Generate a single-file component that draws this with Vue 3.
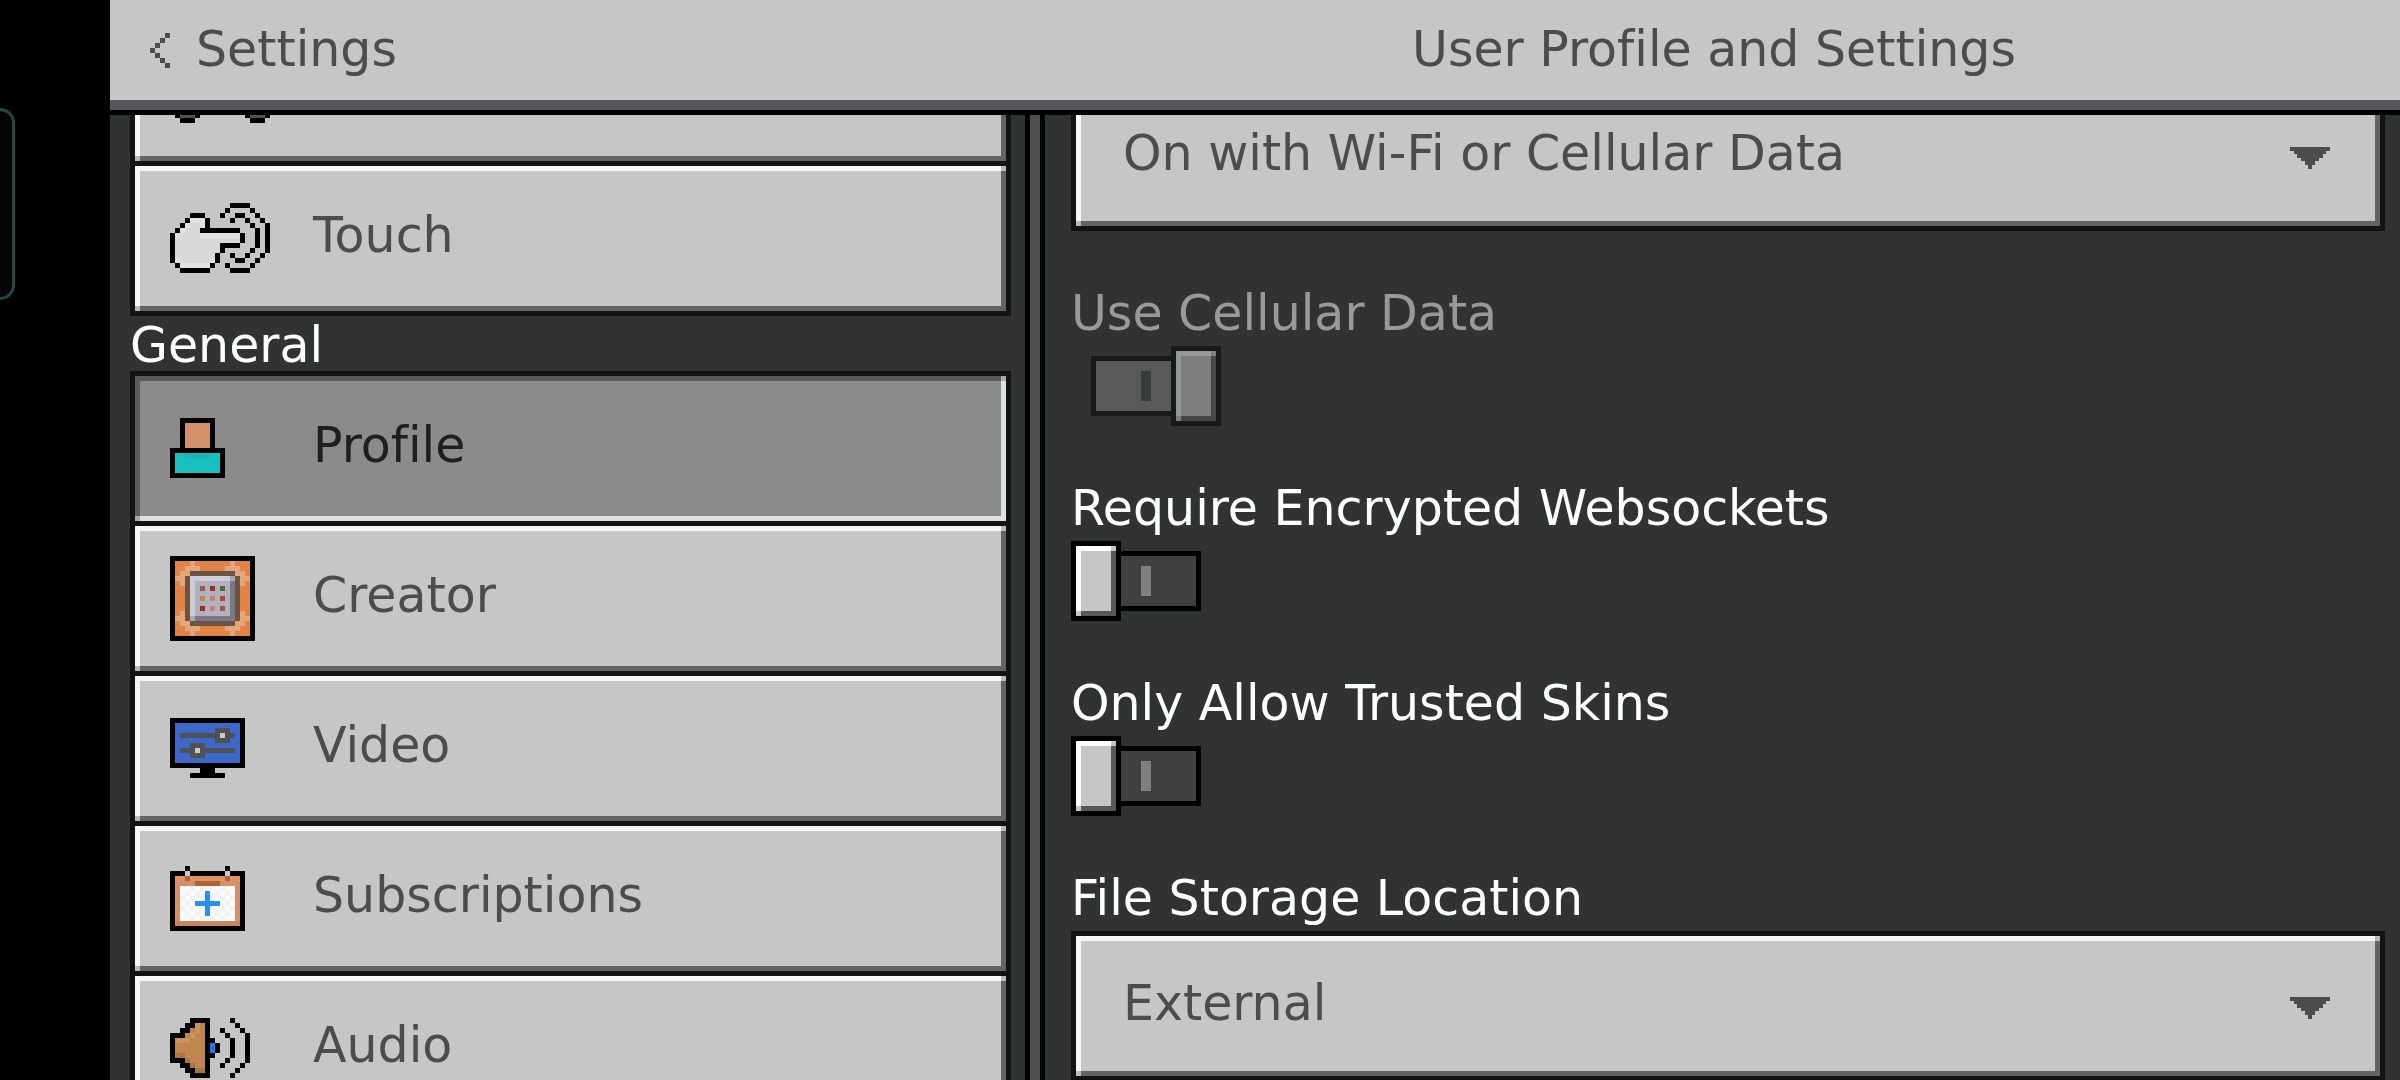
<template>
  <div class="screen">
    <div class="cutout">
      <div class="edge-handle"></div>
    </div>

    <div class="settings">
      <header class="top-bar">
        <button class="back-button">
          <svg class="back-icon" viewBox="0 0 4 7" width="20" height="35" shape-rendering="crispEdges" fill="currentColor">
            <path d="M3 0h1v1h-1zM2 1h1v1h-1zM1 2h1v1h-1zM0 3h1v1h-1zM1 4h1v1h-1zM2 5h1v1h-1zM3 6h1v1h-1z" />
          </svg>
          <span>Settings</span>
        </button>
        <h1 class="title">User Profile and Settings</h1>
      </header>

      <div class="panels">
        <nav class="sidebar">
          <template v-for="group in groups" :key="group.name">
            <h2 v-if="group.title" class="group-title">{{ group.title }}</h2>
            <div :class="['group', { 'scrolled': !group.title }]">
              <button
                v-for="item in group.items"
                :key="item.icon"
                :class="['nav-item', 'bevel', { 'active': item.icon === current }]"
                :aria-label="item.icon"
                @click="current = item.icon"
              >
                <span class="nav-icon">
                  <svg
                    :viewBox="`0 0 ${icons[item.icon][0].length} ${icons[item.icon].length}`"
                    :width="icons[item.icon][0].length * 5"
                    :height="icons[item.icon].length * 5"
                    shape-rendering="crispEdges"
                  >
                    <rect
                      v-for="(p, i) in toPixels(icons[item.icon])"
                      :key="i"
                      :x="p.x"
                      :y="p.y"
                      :width="p.w"
                      height="1"
                      :fill="p.color"
                    />
                  </svg>
                </span>
                <span class="nav-label">{{ item.label }}</span>
              </button>
            </div>
          </template>
        </nav>

        <div class="divider"></div>

        <main class="content">
          <div class="dropdown scrolled-dropdown">
            <select v-model="multiplayer" class="bevel" aria-label="Websocket network">
              <option>On with Wi-Fi or Cellular Data</option>
              <option>On with Wi-Fi only</option>
            </select>
            <svg class="arrow" viewBox="0 0 40 22" width="40" height="22" shape-rendering="crispEdges">
              <path :d="arrowPath" fill="#4c4c4c" />
            </svg>
          </div>

          <div v-for="option in options" :key="option.id" class="option">
            <label :for="option.id" :class="{ 'disabled': option.disabled }">{{ option.label }}</label>
            <input
              :id="option.id"
              v-model="option.value"
              type="checkbox"
              class="toggle"
              :disabled="option.disabled"
            />
          </div>

          <div class="option">
            <label for="storage">File Storage Location</label>
            <div class="dropdown">
              <select id="storage" v-model="storage" class="bevel">
                <option>External</option>
                <option>Application</option>
              </select>
              <svg class="arrow" viewBox="0 0 40 22" width="40" height="22" shape-rendering="crispEdges">
                <path :d="arrowPath" fill="#4c4c4c" />
              </svg>
            </div>
          </div>
        </main>
      </div>
    </div>
  </div>
</template>

<script setup>
import { ref } from 'vue';

const current = ref('profile');
const multiplayer = ref('On with Wi-Fi or Cellular Data');
const storage = ref('External');

const groups = [
  {
    name: 'controls',
    items: [
      { icon: 'controller', label: '' },
      { icon: 'touch', label: 'Touch' },
    ],
  },
  {
    name: 'general',
    title: 'General',
    items: [
      { icon: 'profile', label: 'Profile' },
      { icon: 'creator', label: 'Creator' },
      { icon: 'video', label: 'Video' },
      { icon: 'subscriptions', label: 'Subscriptions' },
      { icon: 'audio', label: 'Audio' },
    ],
  },
];

const options = ref([
  { id: 'cellular', label: 'Use Cellular Data', value: true, disabled: true },
  { id: 'websockets', label: 'Require Encrypted Websockets', value: false, disabled: false },
  { id: 'skins', label: 'Only Allow Trusted Skins', value: false, disabled: false },
]);

const arrowPath = 'M0 0h40v4h-4v3h-3v4h-4v3h-4v4h-3v4h-4v-4h-3v-4h-4v-3h-4v-4h-3v-3h-4z';

// One character per pixel, '.' is transparent
const palette = {
  K: '#000000',
  W: '#e2e2e2',
  w: '#d8d8d8',
  G: '#505152',
  g: '#c9c9c9',
  S: '#d2906b',
  C: '#17c0bd',
  c: '#17b5b3',
  O: '#df8346',
  P: '#e5a67b',
  B: '#6c5342',
  L: '#cfccd9',
  M: '#a9a6b5',
  I: '#b3b1bb',
  D: '#7b7985',
  1: '#a05450',
  2: '#972e2e',
  3: '#4d6c2e',
  4: '#bd8a4a',
  5: '#c77b7b',
  6: '#c03f3c',
  U: '#3b68c9',
  T: '#e09464',
  t: '#d2906b',
  d: '#c68760',
  b: '#ad6538',
  F: '#fbfbfb',
  f: '#f2f2f2',
  A: '#2a8ff0',
  N: '#c1864f',
  n: '#c8935f',
  m: '#a87844',
  Z: '#187af0',
};

const icons = {
  controller: [
    '.....................',
    '.....................',
    '...KKKKKKKKKKKKKKK...',
    '..KGGGGGGGGGGGGGGGK..',
    '.KGGGGGGGGGGGGGGGGGK.',
    '.KGGGGGGGGGGGGGGGGGK.',
    'KGGGGGGGGGGGGGGGGGGGK',
    'KGGGGGGGGGGGGGGGGGGGK',
    'KGGGGGGGGGGGGGGGGGGGK',
    'KGGGGGGKKKKKKKGGGGGGK',
    'KGGGGGK.......KGGGGGK',
    'KGGGGK.........KGGGGK',
    '.KGGGK.........KGGGK.',
    '..KKK...........KKK..',
  ],
  touch: [
    '............KKKK....',
    '...........K....K...',
    '....KKK...K..KK..K..',
    '...KWWWK....K..K..K.',
    '..KWwwWK........K..K',
    '.KWwwwKKKKKKKK...K.K',
    'KWwwwwWWWWWWWWK..K.K',
    'KwwwwwwwwwwwwwK..K.K',
    'KwwwwwwwwwKKKK...K.K',
    'KwwwwwwwwwK.....K..K',
    'KwwwwwwwwK..K..K..K.',
    'KWwwwwwwWK...KK..K..',
    '.KWWWWWWK..K....K...',
    '..KKKKKK....KKKK....',
  ],
  profile: [
    '..KKKKKKK..',
    '..KSSSSSK..',
    '..KSSSSSK..',
    '..KSSSSSK..',
    '..KSSSSSK..',
    '..KSSSSSK..',
    'KKKKKKKKKKK',
    'KCCcccccCCK',
    'KCCCCCCCCCK',
    'KCCCCCCCCCK',
    'KCCCCCCCCCK',
    'KKKKKKKKKKK',
  ],
  creator: [
    'KKKKKKKKKKKKKKKKK',
    'KOOOPOOOOOOOPOOOK',
    'KOOPPPOOOOOPPPOOK',
    'KOPPBBBBBBBBBPPOK',
    'KPPBLLLLLLLLMBPPK',
    'KOPBLIIIIIIIDBPOK',
    'KOOBLI1I2I3IDBOOK',
    'KOOBLIIIIIIIDBOOK',
    'KOOBLI4I5I6IDBOOK',
    'KOOBLIIIIIIIDBOOK',
    'KOOBLI2I5I1IDBOOK',
    'KOPBLIIIIIIIDBPOK',
    'KPPBMDDDDDDDDBPPK',
    'KOPPBBBBBBBBBPPOK',
    'KOOPPPOOOOOPPPOOK',
    'KOOOPOOOOOOOPOOOK',
    'KKKKKKKKKKKKKKKKK',
  ],
  video: [
    'KKKKKKKKKKKKKKK',
    'KUUUUUUUUUUUUUK',
    'KUUUUUUUUGGGUUK',
    'KUGGGGGGGGgGGUK',
    'KUUUUUUUUGGGUUK',
    'KUUUGGGUUUUUUUK',
    'KUGGGgGGGGGGGUK',
    'KUUUGGGUUUUUUUK',
    'KUUUUUUUUUUUUUK',
    'KKKKKKKKKKKKKKK',
    '......KKK......',
    '....KKKKKKK....',
  ],
  subscriptions: [
    '...K.......K...',
    'KKKgKKKKKKKgKKK',
    'KTTbTTTTTTTbTTK',
    'KttttbbbbbttttK',
    'KtFFfFfFfFfFFtK',
    'KtFfFfFAFfFfFtK',
    'KtfFfFfAfFfFftK',
    'KtFfFAAAAAFfFtK',
    'KtfFfFfAfFfFftK',
    'KtFfFfFAFfFfFtK',
    'KtFFfFfFfFfFFtK',
    'KdddddddddddddK',
    'KKKKKKKKKKKKKKK',
  ],
  audio: [
    '....KKKK....K...',
    '...KKnNK.....K..',
    '..KKNnNK..K...K.',
    'KKKNnNNK...K...K',
    'KnnnNNNKK...K..K',
    'KNNNNNNKZK..K..K',
    'KNNNNNNKZK..K..K',
    'KmmNNNNKK...K..K',
    'KKKmNNNK...K...K',
    '..KKmNNK..K...K.',
    '...KKmmK.....K..',
    '....KKKK....K...',
  ],
};

// Merge neighbouring pixels of one colour into a single rect
const toPixels = (rows) => {
  const pixels = [];
  rows.forEach((row, y) => {
    let x = 0;
    while (x < row.length) {
      let w = 1;
      while (row[x + w] === row[x]) w++;
      if (row[x] !== '.') {
        pixels.push({ x, y, w, color: palette[row[x]] });
      }
      x += w;
    }
  });
  return pixels;
};
</script>

<style>
body {
  margin: 0;
  background: #000;
}
</style>

<style scoped>
.screen {
  display: flex;
  height: 100vh;
  overflow: hidden;
  background: #000;
  color: #4c4c4c;
  font-family: "DejaVu Sans", sans-serif;
  font-size: 49px;
  line-height: 50px;
  font-variant-ligatures: none;
}

.screen * {
  box-sizing: border-box;
}

button,
select {
  font: inherit;
  font-variant-ligatures: none;
  color: inherit;
  border: none;
  cursor: pointer;
}

.cutout {
  flex: 0 0 110px;
  padding-top: 108px;
}

.edge-handle {
  width: 15px;
  height: 192px;
  background: #050507;
  border: 3px solid #1f4a40;
  border-left: none;
  border-radius: 0 20px 20px 0;
}

.settings {
  flex: 1;
  min-width: 0;
  display: flex;
  flex-direction: column;
}

.top-bar,
.panels {
  display: grid;
  grid-template-columns: 23fr 10px 34fr;
}

.top-bar {
  flex: none;
  align-items: center;
  height: 115px;
  background: #c6c6c6;
  border-bottom: 5px solid #000;
  box-shadow: inset 0 -10px 0 #58585a, inset 0 -15px 0 #c6c7ca;
  padding-bottom: 10px;
}

.back-button {
  display: flex;
  align-items: center;
  gap: 26px;
  padding: 0 0 0 40px;
  background: none;
}

.title {
  grid-column: 3;
  margin: 0;
  padding-right: 12px;
  font: inherit;
  font-variant-ligatures: none;
  text-align: center;
}

.panels {
  flex: 1;
  min-height: 0;
}

.sidebar,
.content {
  min-width: 0;
  overflow: hidden;
  background: #313332;
}

.sidebar {
  padding: 0 14px 0 20px;
  border-right: 5px solid #000;
}

.divider {
  background: #4f4f50;
}

.group {
  display: flex;
  flex-direction: column;
}

.group.scrolled {
  margin-top: -104px;
}

.group-title {
  height: 55px;
  margin: 0;
  padding-top: 5px;
  font: inherit;
  color: #fff;
}

/* Raised pixel frame: light top and left edges, dark bottom and right ones */
.bevel {
  --face: #c6c6c6;
  --light: #f7f7f7;
  --shade: #646464;
  --corner: #bababa;
  border: 5px solid #131313;
  border-radius: 0;
  background:
    linear-gradient(var(--corner), var(--corner)) left bottom / 5px 5px no-repeat,
    linear-gradient(var(--corner), var(--corner)) right top / 5px 5px no-repeat,
    linear-gradient(var(--light), var(--light)) left top / 100% 5px no-repeat,
    linear-gradient(var(--light), var(--light)) left top / 5px 100% no-repeat,
    linear-gradient(var(--shade), var(--shade)) left bottom / 100% 5px no-repeat,
    linear-gradient(var(--shade), var(--shade)) right top / 5px 100% no-repeat,
    var(--face);
}

.nav-item {
  flex: none;
  display: flex;
  align-items: center;
  height: 155px;
  padding: 0 35px 1px;
  text-align: left;
}

.nav-item + .nav-item {
  margin-top: -5px;
}

.nav-item.active {
  --face: #8b8b8b;
  --light: #5a595b;
  --shade: #dfe0e0;
  --corner: #a8a8a8;
  color: #1f1f1f;
}

.nav-icon {
  display: flex;
  flex: 0 0 143px;
}

.nav-label {
  padding-bottom: 4px;
}

.content {
  display: flex;
  flex-direction: column;
  gap: 58px;
  padding: 0 15px 0 26px;
  border-left: 5px solid #000;
}

.dropdown {
  display: grid;
  flex: none;
  align-items: center;
}

.scrolled-dropdown {
  margin-top: -34px;
}

.dropdown select,
.dropdown .arrow {
  grid-area: 1 / 1;
}

.dropdown select {
  appearance: none;
  width: 100%;
  height: 150px;
  padding: 0 100px 4px 47px;
  outline: none;
}

.arrow {
  justify-self: end;
  margin-top: 4px;
  margin-right: 55px;
  pointer-events: none;
}

.option {
  display: flex;
  flex-direction: column;
  flex: none;
  gap: 7px;
}

.option label {
  color: #fff;
}

.option label.disabled {
  color: #989a99;
}

.toggle {
  --edge: #000;
  --face: #c6c6c6;
  --light: #fff;
  --shade: #585859;
  --track: #404040;
  --mark: #808080;
  appearance: none;
  display: flex;
  align-items: center;
  width: 150px;
  height: 80px;
  margin: 0;
  cursor: pointer;
}

.toggle::before {
  content: "";
  box-sizing: border-box;
  width: 50px;
  height: 80px;
  border: 5px solid var(--edge);
  background:
    linear-gradient(var(--face), var(--face)) left bottom / 5px 5px no-repeat,
    linear-gradient(var(--face), var(--face)) right top / 5px 5px no-repeat,
    linear-gradient(var(--light), var(--light)) left top / 100% 5px no-repeat,
    linear-gradient(var(--light), var(--light)) left top / 5px 100% no-repeat,
    linear-gradient(var(--shade), var(--shade)) left bottom / 100% 5px no-repeat,
    linear-gradient(var(--shade), var(--shade)) right top / 5px 100% no-repeat,
    var(--face);
}

.toggle::after {
  content: "";
  box-sizing: border-box;
  width: 80px;
  height: 60px;
  border: 5px solid var(--edge);
  border-left: none;
  background: linear-gradient(var(--mark), var(--mark)) left 20px center / 10px 30px no-repeat, var(--track);
}

.toggle:checked {
  flex-direction: row-reverse;
}

.toggle:checked::after {
  border-left: 5px solid var(--edge);
  border-right: none;
  background-position: right 20px center;
}

.toggle:disabled {
  --edge: #181919;
  --face: #7e7e7e;
  --light: #989898;
  --shade: #464646;
  --track: #585a59;
  --mark: #3a3b3a;
  cursor: default;
}
</style>
